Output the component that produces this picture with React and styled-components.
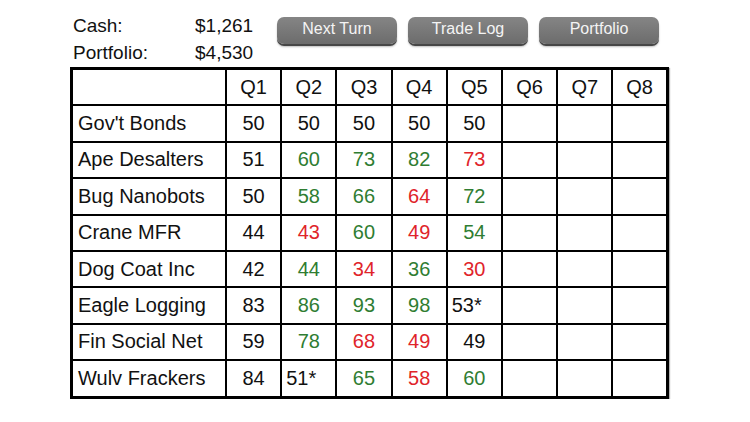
import styled, { createGlobalStyle } from 'styled-components'

const GlobalStyle = createGlobalStyle`
  body {
    margin: 0;
    background: #fff;
    font-family: 'Liberation Sans', Arial, sans-serif;
  }
`

const companies = [
  { name: "Gov't Bonds", values: ['50', '50', '50', '50', '50'], colors: ['k', 'k', 'k', 'k', 'k'] },
  { name: 'Ape Desalters', values: ['51', '60', '73', '82', '73'], colors: ['k', 'g', 'g', 'g', 'r'] },
  { name: 'Bug Nanobots', values: ['50', '58', '66', '64', '72'], colors: ['k', 'g', 'g', 'r', 'g'] },
  { name: 'Crane MFR', values: ['44', '43', '60', '49', '54'], colors: ['k', 'r', 'g', 'r', 'g'] },
  { name: 'Dog Coat Inc', values: ['42', '44', '34', '36', '30'], colors: ['k', 'g', 'r', 'g', 'r'] },
  { name: 'Eagle Logging', values: ['83', '86', '93', '98', '53*'], colors: ['k', 'g', 'g', 'g', 'k'] },
  { name: 'Fin Social Net', values: ['59', '78', '68', '49', '49'], colors: ['k', 'g', 'r', 'r', 'k'] },
  { name: 'Wulv Frackers', values: ['84', '51*', '65', '58', '60'], colors: ['k', 'k', 'g', 'r', 'g'] },
]

const quarters = ['Q1', 'Q2', 'Q3', 'Q4', 'Q5', 'Q6', 'Q7', 'Q8']

const palette = { k: '#111', g: '#2f7d32', r: '#e0242a' }

const Page = styled.div`
  padding: 10px 0 0 70px;
  width: 600px;
`

const TopBar = styled.div`
  display: flex;
  align-items: flex-start;
  height: 57px;
`

const Summary = styled.div`
  display: grid;
  grid-template-columns: 122px auto;
  padding: 2px 0 0 3px;
  font-size: 19px;
  line-height: 27px;
  color: #111;
  width: 204px;
`

const Buttons = styled.div`
  display: flex;
  gap: 11px;
  padding-top: 7px;
`

const Button = styled.button`
  width: 120px;
  height: 27px;
  border: none;
  border-radius: 7px;
  background: linear-gradient(#858585, #767676 60%, #6c6c6c);
  box-shadow: 0 2px 0 #474747, 0 3px 2px rgba(0, 0, 0, 0.25);
  color: #f4f4f4;
  font-family: 'Liberation Sans', Arial, sans-serif;
  font-size: 16px;
  padding: 0 0 3px;
`

const Table = styled.table`
  border-collapse: collapse;
  border: 3px solid #000;
  table-layout: fixed;
  width: 599px;
  box-shadow: 1px 1px 1px rgba(0, 0, 0, 0.3);
`

const Cell = styled.td`
  border: 2px solid #000;
  height: 34.4px;
  padding: 0;
  font-size: 20px;
  text-align: ${(p) => (p.$left ? 'left' : 'center')};
  padding-left: ${(p) => (p.$left ? '5px' : '0')};
  color: ${(p) => palette[p.$c || 'k']};
  width: ${(p) => (p.$wide ? '152px' : 'auto')};
`

const AsteriskCell = styled(Cell)`
  text-align: left;
  padding-left: 4px;
`

export default function App() {
  return (
    <Page>
      <GlobalStyle />
      <TopBar>
        <Summary>
          <span>Cash:</span>
          <span>$1,261</span>
          <span>Portfolio:</span>
          <span>$4,530</span>
        </Summary>
        <Buttons>
          <Button>Next Turn</Button>
          <Button>Trade Log</Button>
          <Button>Portfolio</Button>
        </Buttons>
      </TopBar>
      <Table>
        <tbody>
          <tr>
            <Cell $wide />
            {quarters.map((q) => (
              <Cell key={q}>{q}</Cell>
            ))}
          </tr>
          {companies.map((c) => (
            <tr key={c.name}>
              <Cell $left $wide>{c.name}</Cell>
              {quarters.map((q, i) => {
                const v = c.values[i]
                if (v && v.endsWith('*')) {
                  return <AsteriskCell key={q}>{v}</AsteriskCell>
                }
                return (
                  <Cell key={q} $c={c.colors[i]}>
                    {v || ''}
                  </Cell>
                )
              })}
            </tr>
          ))}
        </tbody>
      </Table>
    </Page>
  )
}
